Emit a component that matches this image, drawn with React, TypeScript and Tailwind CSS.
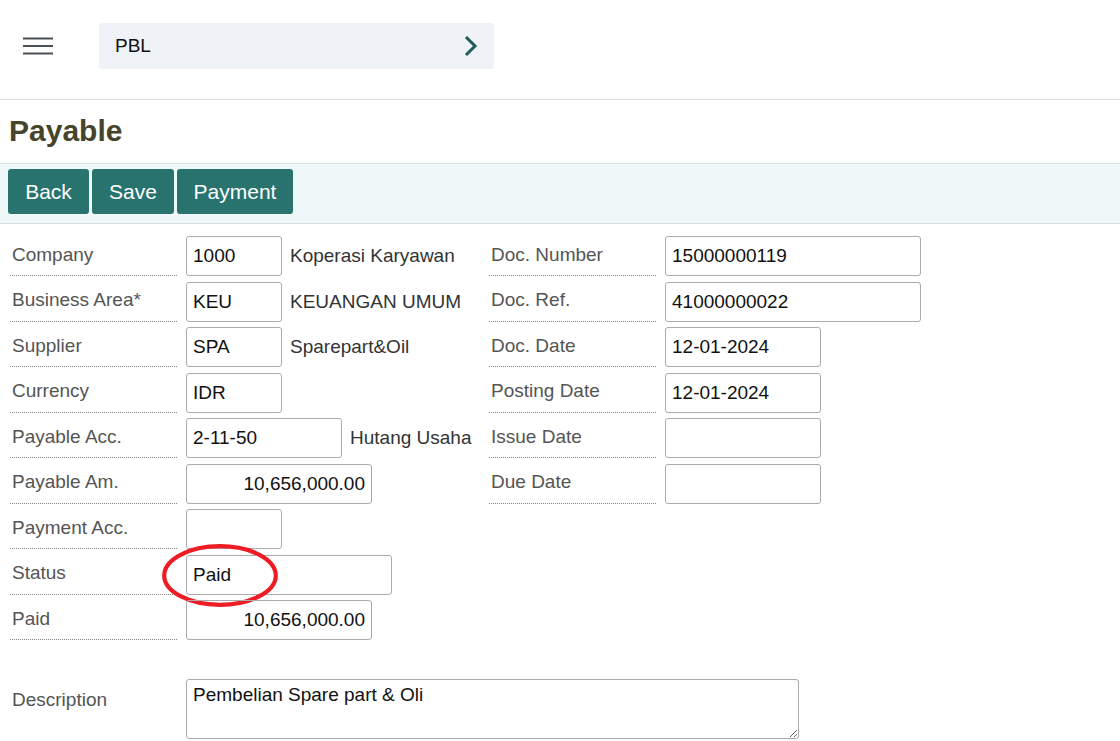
import React from "react";

type Row = {
  label: string;
  value?: string;
  width: string;
  align?: "right";
  note?: string;
  mark?: boolean;
};

const leftRows: Row[] = [
  { label: "Company", value: "1000", width: "w-[96px]", note: "Koperasi Karyawan" },
  { label: "Business Area*", value: "KEU", width: "w-[96px]", note: "KEUANGAN UMUM" },
  { label: "Supplier", value: "SPA", width: "w-[96px]", note: "Sparepart&Oil" },
  { label: "Currency", value: "IDR", width: "w-[96px]" },
  { label: "Payable Acc.", value: "2-11-50", width: "w-[156px]", note: "Hutang Usaha" },
  { label: "Payable Am.", value: "10,656,000.00", width: "w-[186px]", align: "right" },
  { label: "Payment Acc.", value: "", width: "w-[96px]" },
  { label: "Status", value: "Paid", width: "w-[206px]", mark: true },
  { label: "Paid", value: "10,656,000.00", width: "w-[186px]", align: "right" },
];

const rightRows: Row[] = [
  { label: "Doc. Number", value: "15000000119", width: "w-[256px]" },
  { label: "Doc. Ref.", value: "41000000022", width: "w-[256px]" },
  { label: "Doc. Date", value: "12-01-2024", width: "w-[156px]" },
  { label: "Posting Date", value: "12-01-2024", width: "w-[156px]" },
  { label: "Issue Date", value: "", width: "w-[156px]" },
  { label: "Due Date", value: "", width: "w-[156px]" },
];

function Field({ row }: { row: Row }) {
  return (
    <div className="flex items-center h-[40px]">
      <div className="w-[167px] h-[40px] shrink-0 flex items-center pl-[2px] pb-[1px] border-b border-dotted border-[#8a8a8a] text-[#555] whitespace-nowrap">
        {row.label}
      </div>
      <div className="relative ml-[9px]">
        <div
          className={`${row.width} h-[40px] border border-[#ababab] rounded-[3px] flex items-center px-[6px] pt-[1px] text-[#111] ${
            row.align === "right" ? "justify-end" : ""
          }`}
        >
          {row.value}
        </div>
        {row.mark && (
          <svg
            className="absolute left-[-24px] top-[-11px] pointer-events-none"
            width="116"
            height="63"
            viewBox="0 0 116 63"
          >
            <ellipse cx="58" cy="31.5" rx="55.8" ry="29.3" fill="none" stroke="#ee1c25" strokeWidth="4.2" />
          </svg>
        )}
      </div>
      {row.note && <div className="ml-[8px] pt-[1px] text-[#333] whitespace-nowrap">{row.note}</div>}
    </div>
  );
}

export default function App() {
  return (
    <div className="w-[1120px] h-[741px] overflow-hidden bg-white text-[19px] font-['Liberation_Sans',Arial,sans-serif]">
      <div className="h-[100px] border-b border-[#dedede] flex items-start pt-[23px]">
        <div className="w-[99px] h-[46px] flex items-center pl-[23px]">
          <svg width="30" height="18" viewBox="0 0 30 18">
            <path d="M0 1.5h30M0 9h30M0 16.5h30" stroke="#4a5058" strokeWidth="2" />
          </svg>
        </div>
        <div className="w-[395px] h-[46px] bg-[#eff2f7] rounded-[3px] flex items-center justify-between pl-[16px] pr-[16px]">
          <span className="text-[#111]">PBL</span>
          <svg width="14" height="22" viewBox="0 0 14 22">
            <path d="M2 2l9 9-9 9" fill="none" stroke="#1f5b5b" strokeWidth="3" />
          </svg>
        </div>
      </div>

      <div className="h-[63px] pl-[9px] pt-[14px]">
        <h1 className="text-[30px] font-bold text-[#46442a] leading-[34px]">Payable</h1>
      </div>

      <div className="h-[61px] border-t border-b border-[#d9e2e2] bg-[#eef8f9] flex items-start gap-[3px] px-[8px] pt-[5px]">
        <button className="w-[81px] h-[45px] rounded-[3px] bg-[#29736f] text-white text-[21px]">Back</button>
        <button className="w-[82px] h-[45px] rounded-[3px] bg-[#29736f] text-white text-[21px]">Save</button>
        <button className="w-[116px] h-[45px] rounded-[3px] bg-[#29736f] text-white text-[21px]">Payment</button>
      </div>

      <div className="pl-[10px] pt-[12px]">
        <div className="flex">
          <div className="w-[479px] flex flex-col gap-y-[5.5px]">
            {leftRows.map((r) => (
              <Field key={r.label} row={r} />
            ))}
          </div>
          <div className="flex flex-col gap-y-[5.5px]">
            {rightRows.map((r) => (
              <Field key={r.label} row={r} />
            ))}
          </div>
        </div>

        <div className="flex items-start mt-[39px]">
          <div className="w-[167px] h-[40px] pl-[2px] pt-[7px] text-[#555]">Description</div>
          <textarea
            readOnly
            className="ml-[9px] w-[613px] h-[60px] border border-[#ababab] rounded-[3px] px-[6px] py-[3px] text-[#111] text-[19px] leading-[24px] font-['Liberation_Sans',Arial,sans-serif] resize-y outline-none"
            value="Pembelian Spare part & Oli"
          />
        </div>
      </div>
    </div>
  );
}
